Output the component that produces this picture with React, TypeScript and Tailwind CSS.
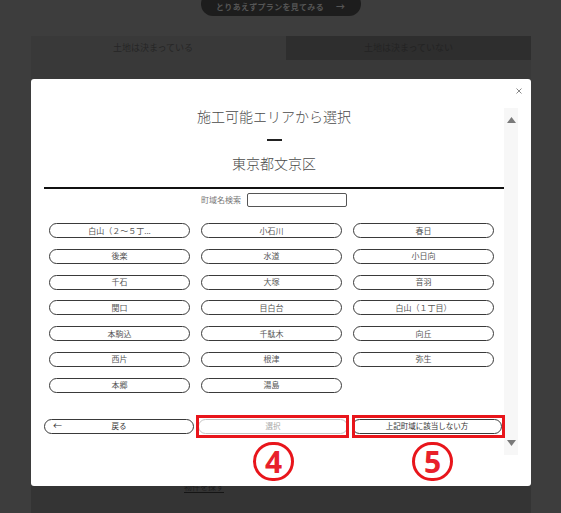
import React from "react";

const towns = [
  "白山（２～５丁...",
  "小石川",
  "春日",
  "後楽",
  "水道",
  "小日向",
  "千石",
  "大塚",
  "音羽",
  "関口",
  "目白台",
  "白山（１丁目）",
  "本駒込",
  "千駄木",
  "向丘",
  "西片",
  "根津",
  "弥生",
  "本郷",
  "湯島",
];

export default function App() {
  return (
    <div
      className="relative w-[561px] h-[513px] overflow-hidden bg-[#3d3d3d]"
      style={{ fontFamily: '"Noto Sans CJK JP", "Noto Sans", sans-serif' }}
    >
      {/* page (dimmed) */}
      <div className="flex flex-col">
        <div className="mx-auto -mt-[8px] h-[24px] w-[160px] rounded-full bg-[#1d1d1d] flex items-end justify-center pb-[4px] gap-[12px]">
          <span className="text-[8px] leading-[10px] font-bold text-[#555] tracking-[0.3px]">
            とりあえずプランを見てみる
          </span>
          <span className="text-[9px] leading-[10px] font-bold text-[#555]">→</span>
        </div>
        <div className="ml-[31px] mt-[20px] w-[500px] h-[480px] bg-[#393939] flex flex-col">
          <div className="grid grid-cols-[244px_1fr] gap-[11px] h-[24px]">
            <div className="flex items-center justify-center text-[9px] text-[#262626]">
              土地は決まっている
            </div>
            <div className="flex items-center justify-center text-[9px] text-[#232323] bg-[#2e2e2e]">
              土地は決まっていない
            </div>
          </div>
          <div className="mt-[150px] flex-1 bg-[#343434] flex flex-col">
            <div className="mt-[261px] ml-[153px]">
              <span className="text-[8px] leading-[9px] text-[#1c1c1c] underline underline-offset-2 decoration-[#151515]">
                物件を探す
              </span>
            </div>
          </div>
        </div>
      </div>

      {/* modal */}
      <div className="absolute left-[31px] top-[79px] w-[500px] h-[407px] bg-white rounded-[3px]">
        <div className="flex pl-[13px] pt-[29px]">
          <div className="w-[460px] flex flex-col">
            <div className="text-center text-[14px] leading-[16px] font-light text-[#4a4a4a]">
              施工可能エリアから選択
            </div>
            <div className="mx-auto mt-[15px] w-[15px] h-[1.5px] bg-[#222]" />
            <div className="mt-[14.5px] text-center text-[14px] leading-[16px] font-light text-[#4a4a4a]">
              東京都文京区
            </div>
            <div className="mt-[16px] h-[2px] w-full bg-[#111]" />
            <div className="mt-[4px] flex items-center justify-center gap-[6px] h-[14px]">
              <span className="text-[8px] leading-[10px] text-[#777]">町域名検索</span>
              <div className="w-[100px] h-[14px] border border-[#555] rounded-[2px]" />
            </div>
            <div className="mt-[16px] ml-[5px] w-[445px] grid grid-cols-3 gap-x-[11px] gap-y-[10.8px]">
              {towns.map((t) => (
                <div
                  key={t}
                  className="h-[15px] rounded-full border border-[#3a3a3a] flex items-center justify-center text-[8px] leading-[10px] text-[#555]"
                >
                  {t}
                </div>
              ))}
            </div>
            <div className="mt-[26px] flex gap-[4px]">
              <div className="relative w-[150px] h-[15px] rounded-full border border-[#3a3a3a] flex items-center justify-center text-[7.5px] leading-[10px] text-[#333]">
                <span className="absolute left-[8px] text-[9px] leading-[10px]">←</span>
                戻る
              </div>
              <div className="w-[150px] h-[15px] rounded-full border border-[#c4c4c4] flex items-center justify-center text-[7.5px] leading-[10px] text-[#aaa]">
                選択
              </div>
              <div className="w-[150px] h-[15px] rounded-full border border-[#3a3a3a] flex items-center justify-center text-[7.5px] leading-[10px] text-[#333]">
                上記町域に該当しない方
              </div>
            </div>
          </div>
          {/* scrollbar */}
          <div className="w-[14px] h-[347px] bg-[#f7f7f7] flex flex-col items-center justify-between py-[9px]">
            <svg width="9" height="6" viewBox="0 0 9 6">
              <path d="M4.5 0 L9 6 L0 6 Z" fill="#7a7a7a" />
            </svg>
            <svg width="9" height="6" viewBox="0 0 9 6">
              <path d="M0 0 L9 0 L4.5 6 Z" fill="#7a7a7a" />
            </svg>
          </div>
        </div>

        {/* close */}
        <svg className="absolute right-[9px] top-[9px]" width="6" height="6" viewBox="0 0 6 6">
          <path d="M0.5 0.5 L5.5 5.5 M5.5 0.5 L0.5 5.5" stroke="#888" strokeWidth="1" />
        </svg>

        {/* annotations */}
        <div className="absolute left-[165px] top-[336px] w-[153px] h-[23px] border-[3px] border-[#e8151b]" />
        <div className="absolute left-[321px] top-[336px] w-[153px] h-[23px] border-[3px] border-[#e8151b]" />
        <div className="absolute left-[222px] top-[363px] w-[41px] h-[39px] rounded-full border-[3px] border-[#e8151b] flex items-center justify-center">
          <span className="text-[30px] leading-[30px] font-bold text-[#e8202a]" style={{ fontFamily: '"Noto Sans", sans-serif' }}>
            4
          </span>
        </div>
        <div className="absolute left-[381px] top-[363px] w-[41px] h-[39px] rounded-full border-[3px] border-[#e8151b] flex items-center justify-center">
          <span className="text-[30px] leading-[30px] font-bold text-[#e8202a]" style={{ fontFamily: '"Noto Sans", sans-serif' }}>
            5
          </span>
        </div>
      </div>
    </div>
  );
}
